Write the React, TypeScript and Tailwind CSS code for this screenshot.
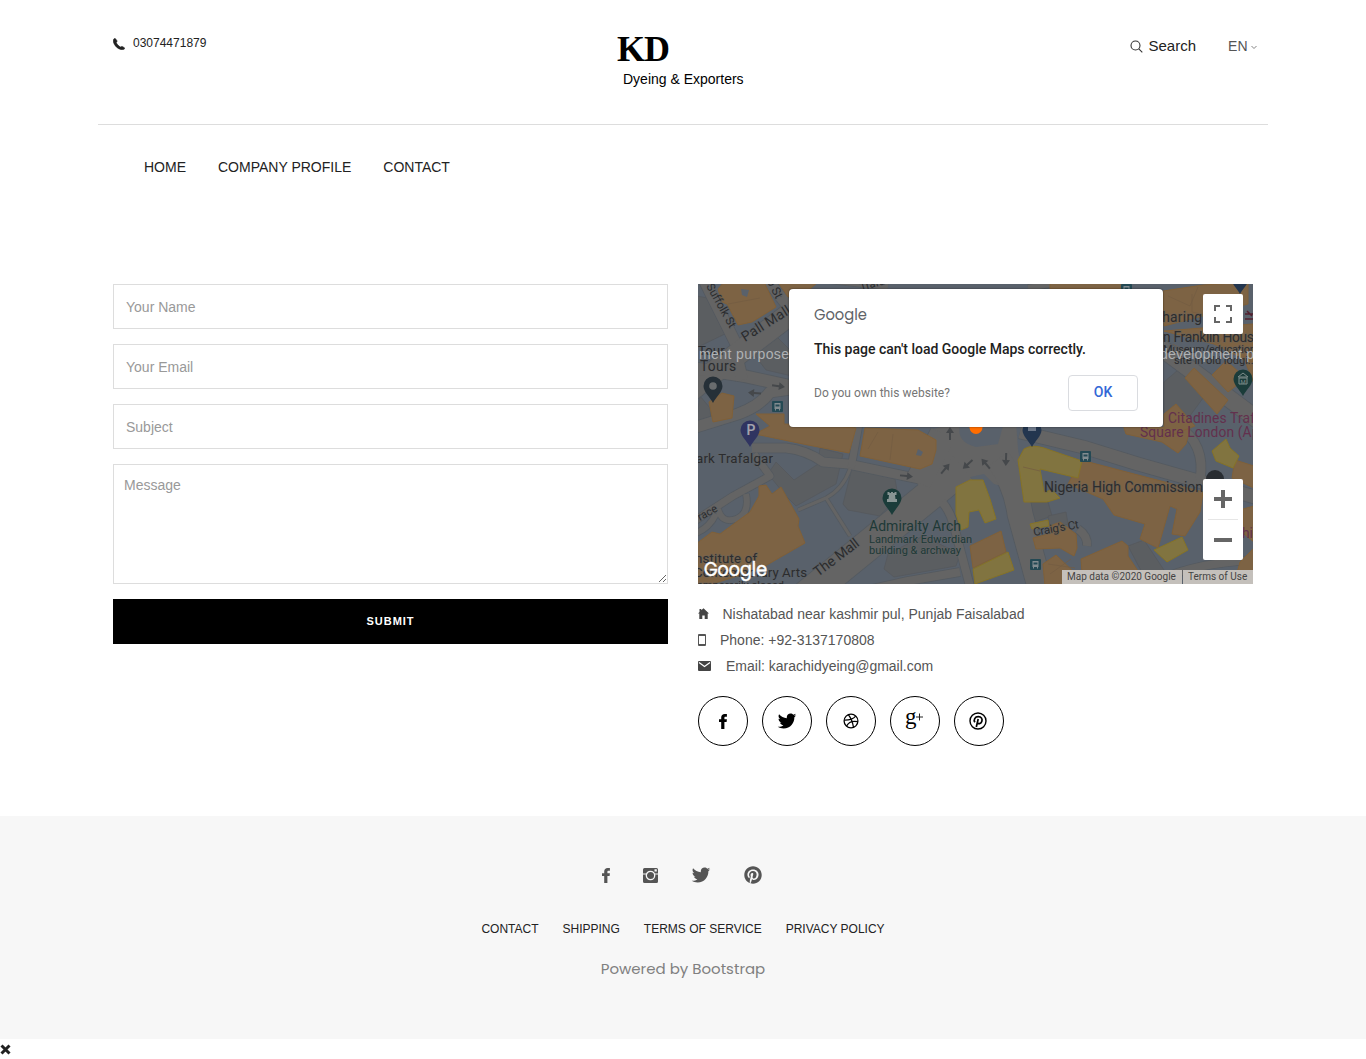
import React from "react";
import { IoLogoTwitter } from "react-icons/io";
import { FaPinterest } from "react-icons/fa";

const sans = "font-['Liberation_Sans',Arial,sans-serif]";

function PhoneIcon() {
  return (
    <svg width="12" height="12" viewBox="0 0 12 12" fill="#222" stroke="#222" strokeWidth=".5">
      <path d="M1 .8C.1 1.500 0 2.800.4 4.200 1.500 7.800 4.500 10.800 8.300 11.700c1.300.3 2.600 0 3.300-.9.3-.4.2-.8-.2-1.100L9.400 8.500c-.4-.2-.8-.1-1.100.1l-.8.4C5.700 8.100 4 6.500 3.300 4.600l.6-.8c.2-.3.3-.7.1-1.100L2.500.7C2.200.3 1.500.3 1 .8z" />
    </svg>
  );
}

function FacebookIcon() {
  return (
    <svg width="8" height="15" viewBox="0 0 8 15" fill="currentColor" className="block">
      <path d="M7.900.1V2.800H6.500C5.600 2.800 5.400 3.200 5.400 3.900V5.200H7.900L7.600 8H5.400V15H2.200V8H0V5.200H2.200V3.500C2.200 1.200 3.600 0 5.700 0 6.700 0 7.500.1 7.900.1z" />
    </svg>
  );
}

function PinterestOutline() {
  return (
    <svg width="18" height="18" viewBox="0 0 18 18" fill="none" stroke="#000">
      <circle cx="9" cy="9" r="8" strokeWidth="1.400" />
      <path d="M5.900 10.200C4.300 7.900 5.800 4.600 9.300 4.600c3.100 0 4.400 2.400 3.500 4.900-.8 2.400-3.500 2.800-4.300 1.200M9.200 7 7.300 15" strokeWidth="1.700" />
    </svg>
  );
}

function Dribbble() {
  return (
    <svg width="16" height="16" viewBox="0 0 16 16" fill="none" stroke="#000" strokeWidth="1.300">
      <circle cx="8" cy="8" r="6.900" />
      <path d="M5.300 1.700C8 5 9.500 8.500 10.500 14.300M1.200 7.200C6 7.300 10 6.500 12.700 3.200M3.500 13.100C5.500 9.300 9.500 7.500 14.800 8.700" />
    </svg>
  );
}

function GooglePlus() {
  return (
    <svg width="20" height="20" viewBox="0 0 20 20">
      <text x="0" y="13" fontFamily="Liberation Serif, serif" fontSize="23" fill="#000">g</text>
      <path d="M14.500 2.500V9.500M11 6H18" stroke="#222" strokeWidth="1" fill="none" />
    </svg>
  );
}

function CameraIcon() {
  return (
    <svg width="15" height="15" viewBox="0 0 15 15">
      <path fill="#555" d="M1.500 0h12A1.500 1.500 0 0 1 15 1.500v12a1.500 1.500 0 0 1-1.500 1.500h-12A1.500 1.500 0 0 1 0 13.500v-12A1.500 1.500 0 0 1 1.500 0z" />
      <path fill="#f7f7f7" d="M0 5.500h3v1H0zM12 5.500H15v1h-3zM11.500 1.200H13.800V3.500H11.500z" />
      <circle cx="7.500" cy="7.500" r="4.200" fill="#555" stroke="#f7f7f7" strokeWidth="1.300" />
    </svg>
  );
}

const roads: [string, number][] = [
  ["M4 -8L42 68", 11],
  ["M-10 108L100 24", 22],
  ["M66 -8L98 32", 11],
  ["M-5 84L46 92L110 106", 12],
  ["M38 70L44 96", 12],
  ["M-5 144L40 130Q62 122 72 108L100 104", 11],
  ["M54 164H88Q108 166 125 178L150 180L226 196", 9],
  ["M161 140L153 184", 7],
  ["M56 170L72 192L35 212L-5 238", 7],
  ["M48 210Q52 230 38 235Q24 240 20 225M18 230Q10 246 -5 250", 6],
  ["M152 185Q145 205 128 214L100 226M128 214L152 252", 3],
  ["M108 312L265 184", 30],
  ["M220 198L245 150", 26],
  ["M300 175Q318 200 322 230L344 310", 25],
  ["M244 218Q253 228 257 246L274 310", 8],
  ["M322 148L385 163L440 180L560 214", 13],
  ["M502 196Q508 160 480 142", 9],
  ["M458 60L560 136", 17],
  ["M160 308L210 297L262 288", 8],
  ["M380 245Q390 252 389 262", 8],
  ["M440 308Q480 280 555 276", 8],
  ["M130 -4L190 3M330 4L380 -5", 6],
];

const blocks = [
  "M-2 12L10 14L31 48L-2 64z",
  "M54 68L78 52L94 68L94 92L68 86z",
  "M70 190L78 178L96 196L120 180L122 164L145 170L138 200L98 222L88 212z",
  "M154 184L197 195L200 212L182 232L150 226L145 220z",
  "M326 218L350 218L354 232L330 240z",
  "M350 232L368 228L370 240L352 246z",
  "M190 270L225 252L262 270L258 282L196 293L186 285z",
  "M430 262L446 256L470 292L450 300z",
  "M466 98L480 86L508 110L486 140L466 128z",
  "M2 112L12 124L13 138L-2 140z",
];

const orange = [
  "M26 -2L20 5L24 18L29 20L40 41L54 38L78 23L66 -2z",
  "M80 -2L90 13L112 5L120 -2z",
  "M11 118L24 109L36 112L34 134L15 138z",
  "M58 130L86 130L86 140L140 142L158 144L151 169L110 161L57 150L72 142z",
  "M167 144L220 146L238 156L238 166L234 180L222 185L162 172z",
  "M-2 260L14 248L22 250L52 228L61 212L61 202L68 201L74 210L83 203L101 235L100 242L107 259L62 285L-2 305z",
  "M383 176L440 191L505 208L502 228L487 252L474 250L479 225L472 222L460 264L442 255L447 240L416 231L405 215L370 200z",
  "M272 262L303 247L308 268L275 284z",
  "M335 254L350 250L352 242L362 238L378 250L379 264L376 272L362 264L338 265z",
  "M345 280L358 271L380 292L374 302L347 302z",
  "M383 275L424 257L430 262L430 272L450 302L385 302z",
  "M352 -2H425V5H352z",
  "M425 141L492 145L488 160L480 169L464 158L428 150z",
  "M465 7L505 1L550 -2V20L466 42z",
  "M466 47L555 40V82L538 71L516 60z",
  "M487 94L496 84L530 116L519 130z",
  "M466 130L478 120L497 142L466 154z",
  "M514 91L528 77L548 94L530 108z",
  "M545 72L557 80V102z",
  "M537 176L556 182V204L534 194z",
  "M545 225L556 222V258L546 250z",
  "M542 278L556 264V300L536 300z",
];

const yellow = [
  "M320 176L326 165Q334 160 346 164L384 177L380 194L342 185L346 208L354 206L362 214L349 218L326 218z",
  "M258 203L272 196L285 196L292 215L298 235L287 239L281 226L271 228L270 243L263 246L258 230z",
  "M275 285L310 268L316 286L277 300z",
  "M332 240L350 236L351 242L334 245z",
  "M456 266L484 253L490 266L469 278z",
  "M514 167L528 155L532 164L541 172L535 184L518 177z",
];

const arrows = ["80 102 8", "57 109 184", "208 192 6", "247 185 -50", "270 180 138", "288 180 230", "308 175 92", "252 150 -90"];

function Pin({ x, y, fill }: { x: number; y: number; fill: string }) {
  return <path d={`M${x} ${y + 17}C${x - 3} ${y + 11} ${x - 9.5} ${y + 6} ${x - 9.5} ${y}A9.5 9.5 0 0 1 ${x + 9.5} ${y}C${x + 9.5} ${y + 6} ${x + 3} ${y + 11} ${x} ${y + 17}z`} fill={fill} />;
}

function Bus({ x, y }: { x: number; y: number }) {
  return (
    <g transform={`translate(${x} ${y})`}>
      <rect width="11" height="11" rx="1" fill="#244954" />
      <path d="M2.500 2h6v6h-6zM3 8h1v1.500H3zM7 8h1v1.500H7z" fill="#828c90" />
      <path d="M3.500 3.500h4v2h-4z" fill="#244954" />
    </g>
  );
}

function MapCanvas() {
  return (
    <svg width="555" height="300" viewBox="0 0 555 300" className="block" fontFamily="Roboto, sans-serif">
      <rect width="555" height="300" fill="#59616b" />
      <g fill="#5b5e61" stroke="#54585c" strokeWidth=".7">
        {blocks.map((d) => <path key={d} d={d} />)}
      </g>
      <g fill="none" stroke="#545a60" strokeLinejoin="round">
        {roads.map(([d, w]) => <path key={d} d={d} strokeWidth={w + 1.6} />)}
      </g>
      <path d="M236 145L258 138H318L320 165L323 184L318 206L296 200L286 190L268 194L244 218L222 205L218 196z" fill="#646464" />
      <g fill="none" stroke="#646464" strokeLinejoin="round">
        {roads.map(([d, w]) => <path key={d} d={d} strokeWidth={w} />)}
      </g>
      <path d="M262 141Q258 158 278 163L300 160L305 142z" fill="#59616b" />
      <g fill="#7d6344" stroke="#806038" strokeWidth="1">
        {orange.map((d) => <path key={d} d={d} />)}
      </g>
      <g fill="#817440" stroke="#867326" strokeWidth="1">
        {yellow.map((d) => <path key={d} d={d} />)}
      </g>
      <path fill="none" stroke="#735c42" strokeWidth=".7" d="M30 20L62 14M170 165L180 148M195 150L192 176M470 12L492 22L500 3M475 60L505 78M508 50L520 60L533 43M325 183L342 187M494 10V28L530 36M350 280L377 284M352 290L373 275" />
      <path d="M43 5l8 1-2 7-5-2zM220 165l5 3-2 4-5-1z" fill="#59616b" />
      {arrows.map((a) => {
        const [x, y, r] = a.split(" ");
        return <path key={a} transform={`translate(${x} ${y}) rotate(${r})`} d="M-6 -1H1V-4L7 0L1 4V1H-6z" fill="#45484b" />;
      })}
      <g fill="#2b2c2e" stroke="#5f6265" strokeWidth="1.500" strokeOpacity=".45" paintOrder="stroke" fontSize="13.300">
        <text transform="translate(8 2) rotate(61)" fontSize="11.500" textLength="49">Suffolk St</text>
        <text transform="translate(64 -12) rotate(63)" fontSize="12" textLength="31">mb St</text>
        <text transform="translate(47 58) rotate(-32)" fontSize="14" textLength="55">Pall Mall</text>
        <text x="0" y="71">Tour</text>
        <text x="2" y="87" fontSize="13.800" textLength="36">Tours</text>
        <text x="-2" y="179" textLength="77">ark Trafalgar</text>
        <text transform="translate(2 237) rotate(-29)" fontSize="11">race</text>
        <text x="-3" y="279" textLength="62">nstitute of</text>
        <text x="-4" y="293" textLength="113">Contemporary Arts</text>
        <text x="-1" y="305" fontSize="11" textLength="87">emporarily closed</text>
        <text transform="translate(120 293) rotate(-37)" fontSize="14" textLength="53">The Mall</text>
        <text x="346" y="208" fontSize="14" textLength="159">Nigeria High Commission</text>
        <text transform="translate(336 252) rotate(-10)" fontSize="11.500" textLength="46">Craig's Ct</text>
        <text x="455" y="38" fontSize="13.800" textLength="49">Charing</text>
        <text x="465" y="58" fontSize="13.800" textLength="98">n Franklin House</text>
        <text x="465" y="69" fontSize="11" textLength="101">Museum/educational</text>
        <text x="476" y="80" fontSize="11">site in old lodgi...</text>
        <text transform="translate(163 7) rotate(-16)" fontSize="11">Trafa</text>
      </g>
      <g fill="#1d3937" fontSize="14" stroke="#666" strokeWidth="1.500" strokeOpacity=".4" paintOrder="stroke">
        <text x="171" y="247" textLength="92">Admiralty Arch</text>
        <text x="171" y="259" fontSize="11" textLength="103">Landmark Edwardian</text>
        <text x="171" y="270" fontSize="11" textLength="92">building &amp; archway</text>
      </g>
      <g fill="#63304d" fontSize="13.800">
        <text x="470" y="139" textLength="106">Citadines Trafalg</text>
        <text x="442" y="153" textLength="127">Square London (Apa</text>
        <text x="544" y="254">hi</text>
      </g>
      <path stroke="#52202f" strokeWidth="1.500" d="M547 30h9M547 35h9M549 27l5 5" />
      <Pin x={15} y={102} fill="#263038" /><circle cx="15" cy="102" r="3.800" fill="#696c6e" />
      <Pin x={52} y={146} fill="#303461" /><text x="48.500" y="151" fontSize="14" fontWeight="600" fill="#a2a2ac">P</text>
      <Pin x={194} y={214} fill="#1b3c3a" />
      <path d="M189.500 208h2v1h1.500v-1h2v1h1.500v-1h2v3h-1.500l.5 4h1.500v3h-10v-3h1.500l.5-4h-1.500z" fill="#889594" />
      <Pin x={545} y={95} fill="#1b3c3a" />
      <path d="M540 93l5-4 5 4zM541 94h8v6h-8z" fill="none" stroke="#7e8d8b" /><text x="542.500" y="99.500" fontSize="6" fill="#7e8d8b">M</text>
      <Pin x={542} y={-7} fill="#23364f" />
      <Pin x={334} y={146} fill="#23364f" /><path d="M330 143h8v4h-8z" fill="#6c7788" />
      <path d="M508 195a9 9 0 0 1 18 0z" fill="#292d32" />
      <circle cx="278" cy="143.500" r="6.500" fill="#ff6d00" />
      <Bus x={74} y={117} /><Bus x={382} y={167} /><Bus x={332} y={275} /><Bus x={423} y={0} />
      <g fill="#b0b2b4" fontFamily="Liberation Sans, Arial, sans-serif" fontSize="14">
        <text x="1" y="75" textLength="90">ment purpose</text>
        <text x="462" y="75" textLength="107">development pur</text>
      </g>
      <text x="6" y="292" textLength="63" lengthAdjust="spacingAndGlyphs" fontFamily="Poppins, Lato, sans-serif" fontSize="19" fontWeight="400" fill="#fff" stroke="#fff" strokeWidth=".5">Google</text>
    </svg>
  );
}

function Map() {
  return (
    <div className="relative h-[300px] w-[555px] overflow-hidden font-[Roboto,sans-serif]">
      <MapCanvas />
      <div className="absolute left-[91px] top-[5px] flex h-[138px] w-[374px] flex-col rounded-[4px] bg-white px-[25px] shadow-[0_0_2px_rgba(0,0,0,0.6)]">
        <svg width="54" height="22" viewBox="0 0 54 22" className="mt-[14px] block">
          <text x="0" y="17" textLength="53" lengthAdjust="spacingAndGlyphs" fontFamily="Poppins, Lato, sans-serif" fontSize="16.500" fontWeight="400" fill="#5f6368">Google</text>
        </svg>
        <p className="mt-[14px] whitespace-nowrap text-[14px] font-medium leading-[20px] text-[#212121]">This page can't load Google Maps correctly.</p>
        <div className="mt-[16px] flex items-center justify-between">
          <span className="text-[12px] leading-[16px] tracking-[0.04px] text-[#757575]">Do you own this website?</span>
          <button className="h-[36px] w-[70px] rounded-[4px] border border-[#dadce0] pb-[2px] text-[14px] font-medium text-[#3367d6]">OK</button>
        </div>
      </div>
      <button className="absolute left-[505px] top-[10px] grid h-[40px] w-[40px] place-items-center rounded-[2px] bg-white">
        <svg width="18" height="18" viewBox="0 0 18 18" fill="none" stroke="#666" strokeWidth="2"><path d="M1 6V1h5M12 1h5v5M17 12v5h-5M6 17H1v-5" /></svg>
      </button>
      <div className="absolute left-[505px] top-[195px] flex h-[81px] w-[40px] flex-col items-center rounded-[2px] bg-white">
        <button className="grid h-[40px] place-items-center"><svg width="18" height="18" viewBox="0 0 18 18" fill="#666"><path d="M7 0h4v7h7v4h-7v7H7v-7H0V7h7z" /></svg></button>
        <div className="h-px w-[30px] bg-[#e6e6e6]" />
        <button className="grid h-[40px] place-items-center"><svg width="18" height="18" viewBox="0 0 18 18" fill="#666"><path d="M0 7h18v4H0z" /></svg></button>
      </div>
      <div className="absolute bottom-0 right-0 flex h-[14px] whitespace-nowrap text-[10px] leading-[14px] text-[#444]">
        <span className="w-[120px] bg-[#c4c0bb] pl-[5px]">Map data ©2020 Google</span>
        <span className="ml-px w-[70px] bg-[#c4c0bb] pl-[5px]">Terms of Use</span>
      </div>
    </div>
  );
}

const field = "h-[45px] w-full border border-[#ddd] px-[12px] text-[14px] text-[#555] outline-none placeholder:text-[#999]";
const circle = "grid h-[50px] w-[50px] place-items-center rounded-full border border-black";

export default function App() {
  return (
    <div className={`${sans} h-[1059px] overflow-hidden bg-white text-[#222]`}>
      <header className="mx-auto h-[284px] w-[1170px]">
        <div className="flex h-[125px] justify-between border-b border-[#ddd] px-[15px]">
          <div className="mt-[34px] flex h-[18px] w-[400px] items-center gap-[8px] text-[12px]">
            <span className="mt-[2px]"><PhoneIcon /></span>
            <span>03074471879</span>
          </div>
          <div className="w-[140px] pt-[28px] text-black">
            <div className="ml-[4px] font-['Liberation_Serif',serif] text-[36px] font-bold leading-[42px] tracking-[-1px]">KD</div>
            <div className="ml-[10px] whitespace-nowrap text-[14px] leading-[18px]">Dyeing &amp; Exporters</div>
          </div>
          <div className="flex h-[20px] w-[400px] justify-end pt-[36px] leading-[20px]">
            <svg width="13" height="13" viewBox="0 0 13 13" fill="none" stroke="#333" strokeWidth="1.100" className="mr-[6px] mt-[4px] shrink-0"><circle cx="5.500" cy="5.500" r="4.500" /><path d="M8.800 8.800l3.500 3.500" /></svg>
            <span className="mr-[32px] text-[15px]">Search</span>
            <span className="text-[14px] text-[#555]">EN</span>
            <svg width="6" height="5" viewBox="0 0 6 5" fill="none" stroke="#777" strokeWidth=".9" className="-mr-[4px] ml-[3.500px] mt-[9px] shrink-0"><path d="M.5 1l2.500 2.500L5.500 1" /></svg>
          </div>
        </div>
        <nav className="flex gap-[32px] pl-[46px] pt-[32px] text-[14px] leading-[20px]">
          <a>HOME</a><a>COMPANY PROFILE</a><a>CONTACT</a>
        </nav>
      </header>

      <main className="mx-auto flex h-[532px] w-[1140px] gap-[30px]">
        <form className="flex w-[555px] flex-col gap-[15px]">
          <input className={field} placeholder="Your Name" />
          <input className={field} placeholder="Your Email" />
          <input className={field} placeholder="Subject" />
          <textarea className="block h-[120px] w-full border border-[#ddd] px-[10px] py-[10px] text-[14px] leading-[20px] outline-none placeholder:text-[#999]" placeholder="Message" />
          <button type="button" className="h-[45px] bg-black text-[11px] font-bold tracking-[1px] text-white">SUBMIT</button>
        </form>
        <section className="w-[555px]">
          <Map />
          <div className="mt-[17px] flex flex-col text-[14px] leading-[26px] text-[#555]">
            <div className="flex items-center">
              <svg width="11" height="11" viewBox="0 0 11 11" className="-mt-[2px] mr-[14px]" fill="#444"><path d="M1.500 1H3.300V2.300L5.500.3L11 5.600H9.700V11H6.700V7.500H4.300V11H1.300V5.600H0L1.500 4.100z" /></svg>
              <span className="-ml-[0.5px]">Nishatabad near kashmir pul, Punjab Faisalabad</span>
            </div>
            <div className="flex items-center">
              <svg width="8" height="12" viewBox="0 0 8 12" className="mr-[14px]"><path fill="#555" fillRule="evenodd" d="M1 0h6a1 1 0 0 1 1 1v10a1 1 0 0 1-1 1H1a1 1 0 0 1-1-1V1a1 1 0 0 1 1-1zm0 2v8h6V2z" /></svg>
              <span>Phone: +92-3137170808</span>
            </div>
            <div className="flex items-center">
              <svg width="13" height="10" viewBox="0 0 13 10" className="mr-[15px]"><rect width="13" height="10" rx="1" fill="#444" /><path d="M1 1.500l5.500 4 5.500-4" fill="none" stroke="#fff" strokeWidth="1.200" /></svg>
              <span>Email: karachidyeing@gmail.com</span>
            </div>
          </div>
          <div className="mt-[17px] flex gap-[14px] text-black">
            <a className={circle}><FacebookIcon /></a>
            <a className={circle}><IoLogoTwitter size={20} /></a>
            <a className={circle}><Dribbble /></a>
            <a className={circle}><GooglePlus /></a>
            <a className={`${circle} pr-[3px]`}><PinterestOutline /></a>
          </div>
        </section>
      </main>

      <footer className="flex h-[223px] flex-col items-center bg-[#f7f7f7]">
        <div className="mt-[49px] flex h-[20px] items-center pr-[2px] text-[#555]">
          <span className="mr-[33px]"><FacebookIcon /></span>
          <CameraIcon />
          <IoLogoTwitter size={20} className="ml-[33px] mr-[33px]" />
          <FaPinterest size={18} />
        </div>
        <div className="mt-[34px] flex gap-[24px] text-[12px] leading-[20px] text-[#222]">
          <a>CONTACT</a><a>SHIPPING</a><a>TERMS OF SERVICE</a><a>PRIVACY POLICY</a>
        </div>
        <p className="mt-[20px] whitespace-nowrap font-[Poppins,Inter,sans-serif] text-[15px] leading-[20px] text-[#808080]">Powered by Bootstrap</p>
      </footer>
      <svg width="11" height="11" viewBox="0 0 11 11" className="mt-[5px]" stroke="#222" strokeWidth="3"><path d="M1.500 1.500l8 8M9.500 1.500l-8 8" /></svg>
    </div>
  );
}
